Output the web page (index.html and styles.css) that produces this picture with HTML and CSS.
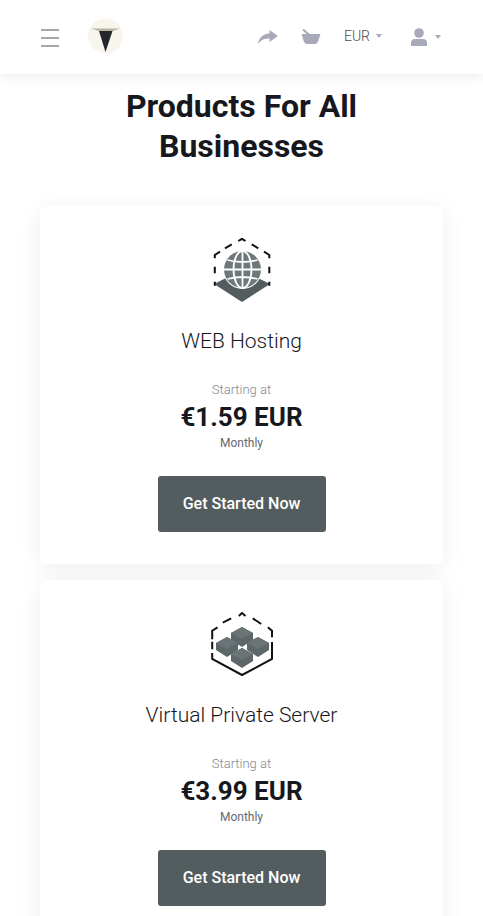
FILE: index.html
```html
<!DOCTYPE html>
<html lang="en">

<head>
    <meta charset="UTF-8">
    <meta name="viewport" content="width=device-width, initial-scale=1.0">
    <title>Products</title>
    <link rel="stylesheet" href="styles.css">
</head>

<body>

    <header class="topbar">
        <div class="topbar-left">
            <div class="burger"><span></span><span></span><span></span></div>
            <div class="logo">
                <svg width="38" height="38" viewBox="0 0 38 38">
                    <circle cx="18.5" cy="18" r="17.5" fill="#f7f5ec"/>
                    <path d="M4 10.5 L33 10.5 L26 13 H12 Z" fill="#b5b5a5"/>
                    <path d="M12 13 L25.5 13 L18.5 34 Z" fill="#24282a"/>
                </svg>
            </div>
        </div>
        <div class="topbar-right">
            <svg class="nav-icon share" width="20" height="14" viewBox="0 0 20 14">
                <path d="M11.5 0 L20 6 L11.5 12 V8.6 C6.5 8.4 3 10 0 14 C0.6 8 4.5 3.8 11.5 3.4 Z" fill="#a9aab9"/>
            </svg>
            <svg class="nav-icon basket" width="20" height="16" viewBox="0 0 20 16">
                <path d="M2 0.5 L9 6.5" stroke="#a9aab9" stroke-width="2" fill="none"/>
                <path d="M0.5 5 H19.5 L18.5 8 C17.8 11 16.5 15 14.5 15 H5.5 C3.5 15 2.2 11 1.5 8 Z" fill="#a9aab9"/>
            </svg>
            <div class="currency">EUR<span class="caret"></span></div>
            <div class="account">
                <svg width="16" height="18" viewBox="0 0 16 18">
                    <circle cx="8" cy="5" r="4.8" fill="#a9aab9"/>
                    <path d="M0 18 V14.5 C0 12 2 11 4 11 H12 C14 11 16 12 16 14.5 V18 Z" fill="#a9aab9"/>
                </svg>
                <span class="caret"></span>
            </div>
        </div>
    </header>

    <main class="content">
        <h1>Products For All Businesses</h1>

        <div class="card">
            <svg class="card-icon" width="60" height="66" viewBox="0 0 60 66">
                <path d="M2 46 L30 32 L58 46 L30 64 Z" fill="#535d5f"/>
                <path d="M26.3 3 L30 0.8 L33.5 3 M13 10.3 L19.7 6.3 M39.7 6.3 L46.3 10.3 M52 13.7 L57.3 17 V20.3 M2.8 20.3 V17 L8 13.7 M2.8 28.7 V35.3 M2.8 43.7 V47.7 M57.3 28.7 V35.3 M57.3 43.7 V47.7" fill="none" stroke="#111" stroke-width="2"/>
                <circle cx="30.5" cy="31.5" r="19.5" fill="#fff"/>
                <circle cx="30.5" cy="31.5" r="18.5" fill="#6f797b"/>
                <ellipse cx="30.5" cy="31.5" rx="9" ry="18.5" fill="none" stroke="#fff" stroke-width="1.8"/>
                <path d="M30.5 13 V50 M12 31.5 H49 M15.5 22 Q30.5 26 45.5 22 M15.5 41 Q30.5 37 45.5 41" fill="none" stroke="#fff" stroke-width="1.8"/>
            </svg>
            <h2>WEB Hosting</h2>
            <div class="starting">Starting at</div>
            <div class="price">€1.59 EUR</div>
            <div class="period">Monthly</div>
            <a class="btn" href="#">Get Started Now</a>
        </div>

        <div class="card">
            <svg class="card-icon" width="62" height="66" viewBox="0 0 62 66">
                <path d="M27.8 4 L31 1 L34.5 4 M11.8 10.7 L20.2 6.3 M41.8 6.3 L50.2 12 M56.8 15.3 L61 18.7 V25.3 M1.2 27.3 V18.7 L6.5 15.3 M1.2 29.7 V37.3 M1.2 41 V47 L31 63 L61 47 V30" fill="none" stroke="#111" stroke-width="2"/>
                <g transform="translate(20 15)">
                    <path d="M0 6 L11 0 L22 6 V13 L11 20 L0 13 Z" fill="#5d6769"/>
                    <path d="M0 6 L11 0 L22 6 L11 12 Z" fill="#6a7476"/>
                </g>
                <g transform="translate(5 25)">
                    <path d="M0 6 L11 0 L22 6 V13 L11 20 L0 13 Z" fill="#5d6769"/>
                    <path d="M0 6 L11 0 L22 6 L11 12 Z" fill="#6a7476"/>
                </g>
                <g transform="translate(36 25)">
                    <path d="M0 6 L11 0 L22 6 V13 L11 20 L0 13 Z" fill="#5d6769"/>
                    <path d="M0 6 L11 0 L22 6 L11 12 Z" fill="#6a7476"/>
                </g>
                <g transform="translate(20 36)">
                    <path d="M0 6 L11 0 L22 6 V13 L11 20 L0 13 Z" fill="#5d6769"/>
                    <path d="M0 6 L11 0 L22 6 L11 12 Z" fill="#6a7476"/>
                </g>
            </svg>
            <h2>Virtual Private Server</h2>
            <div class="starting">Starting at</div>
            <div class="price">€3.99 EUR</div>
            <div class="period">Monthly</div>
            <a class="btn" href="#">Get Started Now</a>
        </div>
    </main>

</body>

</html>
```

FILE: styles.css
```css
html, body {
    height: 916px;
    overflow: hidden;
}

body {
    font-family: 'Roboto', sans-serif;
    background-color: #fff;
    margin: 0;
    color: #16181d;
}

.topbar {
    height: 74px;
    display: flex;
    align-items: center;
    justify-content: space-between;
    padding: 0 42px 0 41px;
    background-color: #fff;
    box-shadow: 0 2px 12px rgba(0, 0, 0, 0.09);
}

.topbar-left {
    display: flex;
    align-items: center;
    gap: 28px;
}

.burger {
    width: 18px;
    display: flex;
    flex-direction: column;
    gap: 6px;
    padding-top: 2px;
}

.burger span {
    display: block;
    height: 2px;
    background-color: #a5a5ad;
}

.logo {
    display: flex;
    filter: blur(0.5px);
}

.topbar-right {
    display: flex;
    align-items: center;
}

.nav-icon.share {
    margin-right: 23px;
}

.nav-icon.basket {
    margin-right: 23px;
}

.currency {
    font-size: 14px;
    font-weight: 300;
    color: #4a4b53;
    margin-right: 29px;
    padding-bottom: 2px;
    display: flex;
    align-items: center;
}

.account {
    display: flex;
    align-items: center;
}

.account .caret {
    margin-left: 8px;
}

.caret {
    display: inline-block;
    width: 0;
    height: 0;
    margin-left: 6px;
    border-left: 3.5px solid transparent;
    border-right: 3.5px solid transparent;
    border-top: 4px solid #a9aab9;
}

.content {
    padding: 12px 40px 0;
    text-align: center;
}

h1 {
    font-size: 32px;
    line-height: 40px;
    font-weight: 700;
    margin: 0 auto 40px;
    width: 300px;
}

.card {
    background-color: #fff;
    border-radius: 6px;
    box-shadow: 0 4px 24px rgba(0, 0, 0, 0.07);
    height: 358px;
    padding-top: 32px;
    margin-bottom: 16px;
    box-sizing: border-box;
    display: flex;
    flex-direction: column;
    align-items: center;
}

.card-icon {
    flex-shrink: 0;
}

h2 {
    font-size: 21px;
    line-height: 28px;
    font-weight: 300;
    margin: 23px 0 0;
}

.starting {
    font-size: 13px;
    font-weight: 300;
    line-height: 16px;
    color: #85868e;
    margin-top: 27px;
}

.price {
    font-size: 26px;
    font-weight: 700;
    line-height: 36px;
    margin-top: 1px;
}

.period {
    font-size: 12px;
    line-height: 16px;
    color: #66676f;
    margin-top: 0;
}

.btn {
    width: 168px;
    height: 56px;
    margin-top: 25px;
    padding-bottom: 1px;
    box-sizing: border-box;
    display: flex;
    align-items: center;
    justify-content: center;
    background-color: #535d5f;
    color: #fff;
    border-radius: 3px;
    font-size: 16px;
    font-weight: 500;
    text-decoration: none;
}
```
